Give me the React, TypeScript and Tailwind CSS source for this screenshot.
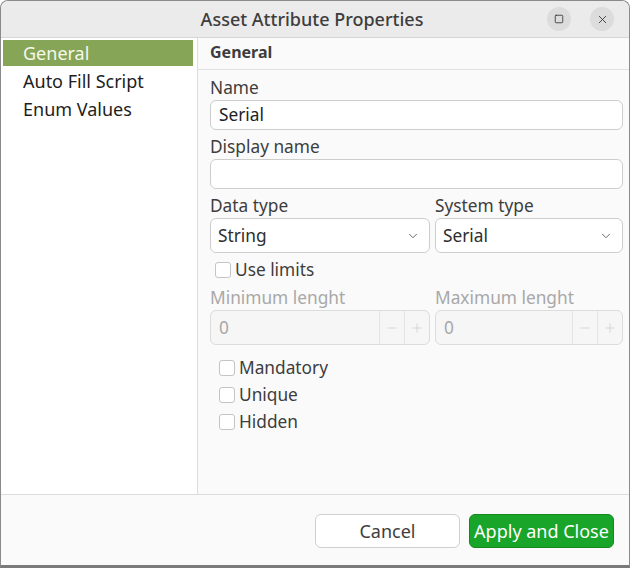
import { ChevronDown, Minus, Plus, Square, X } from "lucide-react";

const font = { fontFamily: '"Noto Sans", "Open Sans", sans-serif' };

function Check({ label }: { label: string }) {
  return (
    <label className="flex h-[27px] items-center gap-[4px] text-[#3d3d3d]">
      <span className="h-[16px] w-[16px] rounded-[3px] border border-[#c4c4c4] bg-white" />
      <span>{label}</span>
    </label>
  );
}

function Combo({ value }: { value: string }) {
  return (
    <div className="flex h-[35px] w-full items-center justify-between rounded-[6px] border border-[#cdcdcd] bg-white pl-[7px] pr-[9px] text-[#2e2e2e]">
      <span>{value}</span>
      <ChevronDown className="h-[14px] w-[14px] text-[#555]" strokeWidth={1.5} />
    </div>
  );
}

function Spin() {
  return (
    <div className="flex h-[35px] w-full items-stretch rounded-[6px] border border-[#dcdcdc] bg-[#f6f6f6] text-[#a8a8a8]">
      <span className="flex flex-1 items-center pl-[8px]">0</span>
      <span className="flex w-[25px] items-center justify-center border-l border-[#e4e4e4]">
        <Minus className="h-[14px] w-[14px] text-[#c8c8c8]" strokeWidth={1.2} />
      </span>
      <span className="flex w-[25px] items-center justify-center border-l border-[#e4e4e4]">
        <Plus className="h-[14px] w-[14px] text-[#c8c8c8]" strokeWidth={1.2} />
      </span>
    </div>
  );
}

export default function App() {
  return (
    <div className="h-[568px] w-[630px] overflow-hidden bg-white" style={font}>
      <div className="flex h-full flex-col rounded-t-[8px] border border-b-[3px] border-[#8a8a8a] border-b-[#7a7a7a] bg-[#fafafa] text-[17.3px]">
        {/* Title bar */}
        <div className="relative flex h-[37px] shrink-0 items-center justify-center rounded-t-[8px] border-b border-[#d6d6d6] bg-[#ebebeb] pr-[6px]">
          <span className="text-[18px] font-medium text-[#3d3d3d]">Asset Attribute Properties</span>
          <div className="absolute right-[15px] top-[6px] flex gap-[19px]">
            <span className="flex h-[24px] w-[24px] items-center justify-center rounded-full bg-[#dcdcdc]">
              <Square className="h-[10px] w-[10px] text-[#333]" strokeWidth={2} />
            </span>
            <span className="flex h-[24px] w-[24px] items-center justify-center rounded-full bg-[#dcdcdc]">
              <X className="h-[13px] w-[13px] text-[#333]" strokeWidth={1.6} />
            </span>
          </div>
        </div>

        {/* Body */}
        <div className="flex flex-1">
          <div className="w-[197px] shrink-0 border-r border-[#dedede] bg-white pt-[2px] pl-[2px] pr-[4px] text-[18px]">
            <div className="flex h-[26px] items-center bg-[#87a556] pl-[20px] text-[#f4f8ee]">General</div>
            <div className="flex h-[29px] items-center pl-[20px] pt-[2px] text-[#1e1e1e]">Auto Fill Script</div>
            <div className="flex h-[28px] items-center pl-[20px] text-[#1e1e1e]">Enum Values</div>
          </div>

          <div className="flex-1">
            <div className="flex h-[32px] items-center border-b border-[#e2e2e2] pb-[4px] pl-[12px] text-[16px] font-bold text-[#3d3d3d]">
              General
            </div>
            <div className="pl-[12px] pr-[6px] pt-[6px] text-[#3d3d3d]">
              <div className="h-[24px] leading-[24px]">Name</div>
              <div className="flex h-[30px] items-center rounded-[6px] border border-[#cdcdcd] bg-white pl-[8px] text-[#1e1e1e]">
                Serial
              </div>
              <div className="mt-[5px] h-[24px] leading-[24px]">Display name</div>
              <div className="h-[30px] rounded-[6px] border border-[#cdcdcd] bg-white" />

              <div className="mt-[5px] flex gap-[5px]">
                <div className="flex flex-1 flex-col">
                  <div className="h-[24px] leading-[24px]">Data type</div>
                  <Combo value="String" />
                </div>
                <div className="flex w-[188px] flex-col">
                  <div className="h-[24px] leading-[24px]">System type</div>
                  <Combo value="Serial" />
                </div>
              </div>

              <div className="mt-[3px] pl-[5px]">
                <Check label="Use limits" />
              </div>

              <div className="mt-[3px] flex gap-[5px] text-[#a8a8a8]">
                <div className="flex flex-1 flex-col">
                  <div className="h-[24px] leading-[24px]">Minimum lenght</div>
                  <Spin />
                </div>
                <div className="flex w-[188px] flex-col">
                  <div className="h-[24px] leading-[24px]">Maximum lenght</div>
                  <Spin />
                </div>
              </div>

              <div className="mt-[9px] pl-[9px]">
                <Check label="Mandatory" />
                <Check label="Unique" />
                <Check label="Hidden" />
              </div>
            </div>
          </div>
        </div>

        {/* Footer */}
        <div className="flex h-[71px] shrink-0 items-start justify-end gap-[9px] border-t border-[#dcdcdc] bg-[#fafafa] pr-[15px] pt-[19px]">
          <button className="h-[34px] w-[145px] rounded-[6px] border border-[#cfcfcf] bg-white text-[18px] text-[#3d3d3d]">Cancel</button>
          <button className="h-[34px] w-[145px] rounded-[6px] border border-[#14881f] bg-[#19a42a] text-[18px] text-white">Apply and Close</button>
        </div>
      </div>
    </div>
  );
}
